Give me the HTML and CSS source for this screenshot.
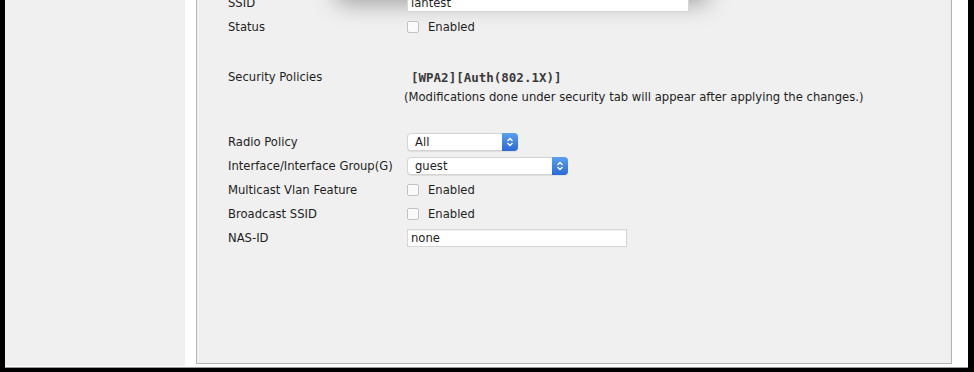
FILE: index.html
```html
<!DOCTYPE html>
<html lang="en">
<head>
  <meta charset="UTF-8">
  <title>WLANs &gt; Edit</title>
  <link rel="stylesheet" href="styles.css">
</head>
<body>

  <div class="frame">
    <!-- left navigation strip -->
    <div class="sidebar"></div>

    <!-- General tab content -->
    <div class="panel">
      <div class="popup-shadow"></div>

      <div class="form">
        <div class="row">
          <div class="label">SSID</div>
          <div class="value"><input class="text-input ssid" type="text" value="lantest"></div>
        </div>
        <div class="row">
          <div class="label">Status</div>
          <div class="value"><span class="check"></span><span class="check-text">Enabled</span></div>
        </div>

        <div class="row spaced-security">
          <div class="label">Security Policies</div>
          <div class="value"><span class="policy">[WPA2][Auth(802.1X)]</span></div>
        </div>
        <div class="note">(Modifications done under security tab will appear after applying the changes.)</div>

        <div class="row spaced-radio">
          <div class="label">Radio Policy</div>
          <div class="value">
            <div class="select radio-select">
              <span>All</span>
              <span class="stepper"><svg width="8" height="10" viewBox="0 0 8 10"><path d="M1.5 4 L4 1.5 L6.5 4 M1.5 6 L4 8.5 L6.5 6" fill="none" stroke="#fff" stroke-width="1.4"/></svg></span>
            </div>
          </div>
        </div>
        <div class="row">
          <div class="label">Interface/Interface Group(G)</div>
          <div class="value">
            <div class="select iface-select">
              <span>guest</span>
              <span class="stepper"><svg width="8" height="10" viewBox="0 0 8 10"><path d="M1.5 4 L4 1.5 L6.5 4 M1.5 6 L4 8.5 L6.5 6" fill="none" stroke="#fff" stroke-width="1.4"/></svg></span>
            </div>
          </div>
        </div>
        <div class="row">
          <div class="label">Multicast Vlan Feature</div>
          <div class="value"><span class="check"></span><span class="check-text">Enabled</span></div>
        </div>
        <div class="row">
          <div class="label">Broadcast SSID</div>
          <div class="value"><span class="check"></span><span class="check-text">Enabled</span></div>
        </div>
        <div class="row">
          <div class="label">NAS-ID</div>
          <div class="value"><input class="text-input nas" type="text" value="none"></div>
        </div>
      </div>
    </div>
  </div>

</body>
</html>
```

FILE: styles.css
```css
* {
  margin: 0;
  padding: 0;
  box-sizing: border-box;
}

html, body {
  height: 100%;
  overflow: hidden;
}

body {
  background: #000;
  font-family: 'DejaVu Sans', Verdana, sans-serif;
  font-size: 11.6px;
  color: #1e1e1e;
}

.frame {
  display: flex;
  gap: 11px;
  width: 963px;
  height: 399px;
  margin: -31px 0 0 5px;
  padding: 0 16px 3px 0;
  background: #fff;
  border-bottom: 1px solid #9a9a9a;
}

.sidebar {
  width: 180px;
  background: #f0f0f0;
  margin-bottom: -2px;
}

.panel {
  position: relative;
  flex: 1;
  background: #f0f0f0;
  border: 1px solid #b4b4b4;
  padding: 21px 0 0 31px;
}

.popup-shadow {
  position: absolute;
  left: 140px;
  top: -40px;
  width: 370px;
  height: 69px;
  background: #f0f0f0;
  box-shadow: 0 4px 22px rgba(0, 0, 0, 0.35);
}

.form {
  position: relative;
}

.row {
  display: flex;
  align-items: center;
  height: 24px;
}

.label {
  width: 179px;
  white-space: nowrap;
}

.value {
  display: flex;
  align-items: center;
}

.spaced-security {
  margin-top: 26px;
}

.spaced-radio {
  margin-top: 25px;
}

.text-input {
  height: 18px;
  border: 1px solid #d6d6d6;
  background: #fff;
  font: inherit;
  color: #1e1e1e;
  padding: 0 3px;
  box-shadow: inset 0 1px 1px rgba(0, 0, 0, 0.06);
}

.ssid {
  width: 282px;
  position: relative;
  z-index: 1;
}

.nas {
  width: 220px;
}

.check {
  width: 12px;
  height: 12px;
  border: 1px solid #c2c2c2;
  border-radius: 2px;
  background: #fafafa;
}

.check-text {
  margin-left: 9px;
}

.policy {
  font-family: 'DejaVu Sans Mono', monospace;
  font-weight: bold;
  font-size: 12.5px;
  margin-left: 4px;
  color: #3a3a3a;
}

.note {
  height: 16px;
  line-height: 16px;
  margin-left: 176px;
  white-space: nowrap;
}

.select {
  display: flex;
  align-items: center;
  justify-content: space-between;
  height: 18px;
  background: #fff;
  border: 1px solid #d4d4d4;
  border-radius: 4px;
  padding-left: 7px;
  box-shadow: 0 1px 1px rgba(0, 0, 0, 0.08);
}

.radio-select {
  width: 111px;
}

.iface-select {
  width: 161px;
}

.stepper {
  display: flex;
  align-items: center;
  justify-content: center;
  width: 16px;
  height: 18px;
  margin: -1px -1px -1px 0;
  border-radius: 0 4px 4px 0;
  background: linear-gradient(#5b9ff0, #2a6ad6);
}
```
